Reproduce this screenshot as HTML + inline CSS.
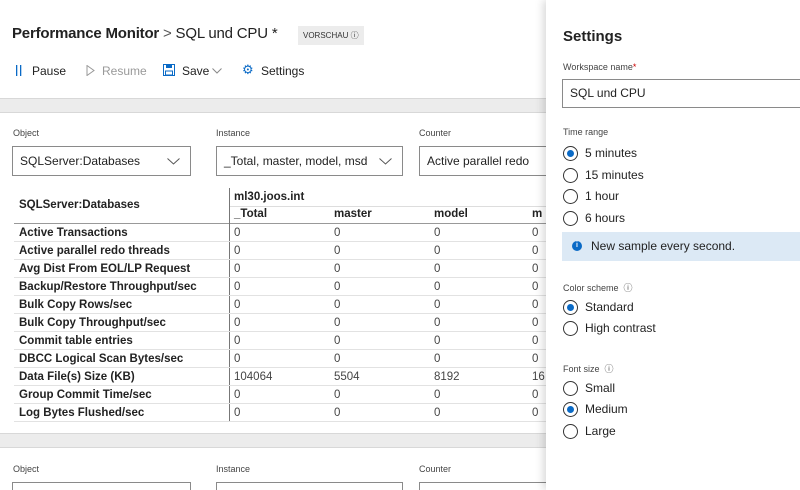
<!DOCTYPE html>
<html><head><meta charset="utf-8"><style>
*{margin:0;padding:0;box-sizing:border-box}
html,body{width:800px;height:490px;overflow:hidden}
body{background:#fff;font-family:"Liberation Sans","DejaVu Sans",sans-serif;color:#222;position:relative}
.a{position:absolute;white-space:nowrap}
.lbl{font-size:9px;color:#444}
.dd{position:absolute;border:1px solid #8a8a8a;height:30px;font-size:12px;line-height:28px;padding-left:7px;color:#222;overflow:hidden;background:#fff}
.chev{position:absolute;right:0;top:0;width:34px;height:28px;background:#fff}
.chev svg{position:absolute;left:11px;top:11px}
.band{position:absolute;left:0;width:546px;background:#ececec;border-top:1px solid #d8d8d8;border-bottom:1px solid #d8d8d8}
.row{position:absolute;left:14px;width:532px;height:18px;border-bottom:1px solid #e2e2e2;font-size:11.5px;line-height:18px}
.row b{position:absolute;left:5px}
.row span{position:absolute;color:#444}
.rad{position:absolute;left:563px;width:15px;height:15px;border:1.3px solid #333;border-radius:50%}
.rad.on::after{content:"";position:absolute;left:2.5px;top:2.5px;width:7px;height:7px;border-radius:50%;background:#0a6ac6}
.rt{position:absolute;left:585px;font-size:12px;color:#222}
</style></head><body>
<div class="a" style="left:12px;top:25px;font-size:15px;letter-spacing:-0.2px"><b>Performance Monitor</b> <span style="color:#555">&gt;</span> SQL und CPU *</div>
<div class="a" style="left:298px;top:26px;background:#ececec;font-size:8px;padding:4px 5px;color:#333">VORSCHAU ⓘ</div>
<svg class="a" style="left:15px;top:65px" width="8" height="11"><rect x="1" y="0" width="1.3" height="11" fill="#0a6ac6"/><rect x="5" y="0" width="1.3" height="11" fill="#0a6ac6"/></svg>
<div class="a" style="left:32px;top:64px;font-size:12px">Pause</div>
<svg class="a" style="left:86px;top:65px" width="9" height="11"><path d="M1 .5 L8 5.5 L1 10.5Z" fill="none" stroke="#999"/></svg>
<div class="a" style="left:102px;top:64px;font-size:12px;color:#999">Resume</div>
<svg class="a" style="left:163px;top:64px" width="12" height="12"><rect x=".5" y=".5" width="11" height="11" fill="none" stroke="#0a6ac6"/><rect x="3" y="1" width="6" height="3" fill="#0a6ac6"/><rect x="2.5" y="7" width="7" height="4" fill="none" stroke="#0a6ac6"/></svg>
<div class="a" style="left:182px;top:64px;font-size:12px">Save</div>
<svg class="a" style="left:212px;top:68px" width="10" height="6"><path d="M.5 .5 L5 5 L9.5 .5" fill="none" stroke="#888"/></svg>
<div class="a" style="left:242px;top:62px;font-size:13px;color:#0a6ac6">⚙</div>
<div class="a" style="left:261px;top:64px;font-size:12px">Settings</div>

<div class="band" style="top:98px;height:15px"></div>
<div class="a lbl" style="left:13px;top:128px">Object</div>
<div class="a lbl" style="left:216px;top:128px">Instance</div>
<div class="a lbl" style="left:419px;top:128px">Counter</div>
<div class="dd" style="left:12px;top:146px;width:179px">SQLServer:Databases<div class="chev"><svg width="13" height="7"><path d="M.5 .5 L6.5 6 L12.5 .5" fill="none" stroke="#555"/></svg></div></div>
<div class="dd" style="left:216px;top:146px;width:187px">_Total, master, model, msdb<div class="chev"><svg width="13" height="7"><path d="M.5 .5 L6.5 6 L12.5 .5" fill="none" stroke="#555"/></svg></div></div>
<div class="dd" style="left:419px;top:146px;width:140px">Active parallel redo threads</div>

<div class="a" style="left:19px;top:199px;font-size:11.5px;font-weight:bold">SQLServer:Databases</div>
<div class="a" style="left:234px;top:191px;font-size:11.5px;font-weight:bold">ml30.joos.int</div>
<div class="a" style="left:229px;top:206px;width:317px;border-top:1px solid #ddd"></div>
<div class="a" style="left:234px;top:208px;font-size:11.5px;font-weight:bold">_Total</div>
<div class="a" style="left:334px;top:208px;font-size:11.5px;font-weight:bold">master</div>
<div class="a" style="left:434px;top:208px;font-size:11.5px;font-weight:bold">model</div>
<div class="a" style="left:532px;top:208px;font-size:11.5px;font-weight:bold">m</div>
<div class="a" style="left:14px;top:223px;width:532px;border-top:1px solid #999"></div>
<div class="a" style="left:229px;top:188px;height:233px;border-left:1px solid #777"></div>
<div class="row" style="top:224px"><b>Active Transactions</b><span style="left:220px">0</span><span style="left:320px">0</span><span style="left:420px">0</span><span style="left:518px">0</span></div>
<div class="row" style="top:242px"><b>Active parallel redo threads</b><span style="left:220px">0</span><span style="left:320px">0</span><span style="left:420px">0</span><span style="left:518px">0</span></div>
<div class="row" style="top:260px"><b>Avg Dist From EOL/LP Request</b><span style="left:220px">0</span><span style="left:320px">0</span><span style="left:420px">0</span><span style="left:518px">0</span></div>
<div class="row" style="top:278px"><b>Backup/Restore Throughput/sec</b><span style="left:220px">0</span><span style="left:320px">0</span><span style="left:420px">0</span><span style="left:518px">0</span></div>
<div class="row" style="top:296px"><b>Bulk Copy Rows/sec</b><span style="left:220px">0</span><span style="left:320px">0</span><span style="left:420px">0</span><span style="left:518px">0</span></div>
<div class="row" style="top:314px"><b>Bulk Copy Throughput/sec</b><span style="left:220px">0</span><span style="left:320px">0</span><span style="left:420px">0</span><span style="left:518px">0</span></div>
<div class="row" style="top:332px"><b>Commit table entries</b><span style="left:220px">0</span><span style="left:320px">0</span><span style="left:420px">0</span><span style="left:518px">0</span></div>
<div class="row" style="top:350px"><b>DBCC Logical Scan Bytes/sec</b><span style="left:220px">0</span><span style="left:320px">0</span><span style="left:420px">0</span><span style="left:518px">0</span></div>
<div class="row" style="top:368px"><b>Data File(s) Size (KB)</b><span style="left:220px">104064</span><span style="left:320px">5504</span><span style="left:420px">8192</span><span style="left:518px">16</span></div>
<div class="row" style="top:386px"><b>Group Commit Time/sec</b><span style="left:220px">0</span><span style="left:320px">0</span><span style="left:420px">0</span><span style="left:518px">0</span></div>
<div class="row" style="top:404px"><b>Log Bytes Flushed/sec</b><span style="left:220px">0</span><span style="left:320px">0</span><span style="left:420px">0</span><span style="left:518px">0</span></div>

<div class="band" style="top:433px;height:15px"></div>
<div class="a lbl" style="left:13px;top:464px">Object</div>
<div class="a lbl" style="left:216px;top:464px">Instance</div>
<div class="a lbl" style="left:419px;top:464px">Counter</div>
<div class="dd" style="left:12px;top:482px;width:179px"></div>
<div class="dd" style="left:216px;top:482px;width:187px"></div>
<div class="dd" style="left:419px;top:482px;width:140px"></div>

<div class="a" style="left:546px;top:0;width:254px;height:490px;background:#fff;box-shadow:-3px 0 8px rgba(0,0,0,.15)"></div>
<div class="a" style="left:563px;top:28px;font-size:15px;font-weight:bold">Settings</div>
<div class="a lbl" style="left:563px;top:62px">Workspace name<span style="color:#c00">*</span></div>
<div class="a" style="left:562px;top:79px;width:240px;height:29px;border:1px solid #8a8a8a;font-size:12px;line-height:27px;padding-left:7px">SQL und CPU</div>
<div class="a lbl" style="left:563px;top:127px">Time range</div>
<div class="rad on" style="top:146px"></div><div class="a rt" style="top:146px">5 minutes</div>
<div class="rad" style="top:168px"></div><div class="a rt" style="top:168px">15 minutes</div>
<div class="rad" style="top:189px"></div><div class="a rt" style="top:189px">1 hour</div>
<div class="rad" style="top:211px"></div><div class="a rt" style="top:211px">6 hours</div>
<div class="a" style="left:562px;top:232px;width:238px;height:29px;background:#dce9f5"></div>
<div class="a" style="left:572px;top:241px;width:10px;height:10px;border-radius:50%;background:#0a6ac6;color:#fff;font-size:7px;line-height:10px;text-align:center;font-weight:bold">i</div>
<div class="a" style="left:591px;top:239px;font-size:12px">New sample every second.</div>
<div class="a lbl" style="left:563px;top:281px">Color scheme &nbsp;ⓘ</div>
<div class="rad on" style="top:300px"></div><div class="a rt" style="top:300px">Standard</div>
<div class="rad" style="top:321px"></div><div class="a rt" style="top:321px">High contrast</div>
<div class="a lbl" style="left:563px;top:362px">Font size &nbsp;ⓘ</div>
<div class="rad" style="top:381px"></div><div class="a rt" style="top:381px">Small</div>
<div class="rad on" style="top:402px"></div><div class="a rt" style="top:402px">Medium</div>
<div class="rad" style="top:424px"></div><div class="a rt" style="top:424px">Large</div>
</body></html>
